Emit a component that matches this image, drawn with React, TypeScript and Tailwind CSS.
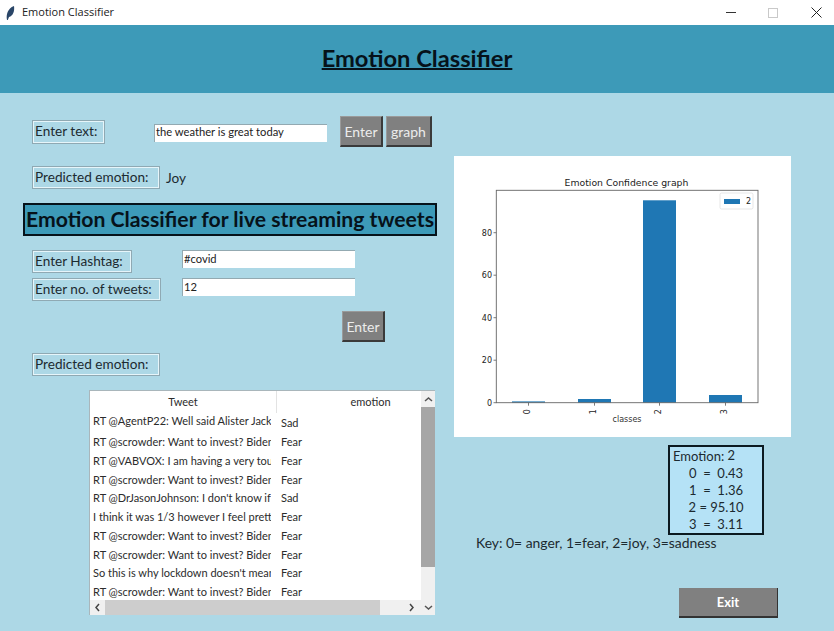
const font = "font-['Lato','Noto_Sans',sans-serif]";

function Label({ w, children }: { w: string; children: React.ReactNode }) {
  return (
    <div className={`${w} h-full flex items-center pl-[2px] border border-[#8fa9b3] shadow-[inset_1px_1px_0_#e6f5fa,inset_-1px_-1px_0_#e6f5fa] text-[13.6px] text-[#1c2a30] whitespace-nowrap`}>
      {children}
    </div>
  );
}

function Btn({ w, children }: { w: string; children: React.ReactNode }) {
  return (
    <div className={`${w} h-[31px] pt-[1px] flex items-center justify-center bg-[#808080] border-t border-l border-t-[#9a9a9a] border-l-[#9a9a9a] border-r-2 border-b-2 border-r-[#3a3a3a] border-b-[#3a3a3a] text-[14px] text-[#ececec]`}>
      {children}
    </div>
  );
}

function Entry({ value }: { value: string }) {
  return (
    <div className="w-[173px] h-[18px] pb-[1px] bg-white border-t border-t-[#93a9b1] border-l border-l-[#93a9b1] pl-[1px] flex items-center text-[11.2px] text-[#222] whitespace-nowrap">
      {value}
    </div>
  );
}

const rows: [string, string][] = [
  ["RT @AgentP22: Well said Alister Jack", "Sad"],
  ["RT @scrowder: Want to invest? Biden", "Fear"],
  ["RT @VABVOX: I am having a very tough", "Fear"],
  ["RT @scrowder: Want to invest? Biden", "Fear"],
  ["RT @DrJasonJohnson: I don't know if it", "Sad"],
  ["I think it was 1/3 however I feel pretty", "Fear"],
  ["RT @scrowder: Want to invest? Biden", "Fear"],
  ["RT @scrowder: Want to invest? Biden", "Fear"],
  ["So this is why lockdown doesn't mean", "Fear"],
  ["RT @scrowder: Want to invest? Biden", "Fear"],
];

function TweetTable() {
  return (
    <div className="ml-[89px] mt-[14px] w-[346px] h-[225px] bg-white border-t border-l border-[#a9b6bb] flex text-[11px] text-[#2c2c2c]">
      <div className="w-[331px] flex flex-col">
        <div className="h-[22px] flex items-center shrink-0 overflow-hidden">
          <div className="w-[187px] shrink-0 h-full text-center leading-[22px] border-r border-r-[#e3e3e3]">Tweet</div>
          <div className="w-[187px] shrink-0 text-center">emotion</div>
        </div>
        <div className="flex-1 overflow-hidden">
          {rows.map(([t, e], i) => (
            <div key={i} className={`flex ${i === 0 ? "h-[20px]" : "h-[18.75px]"} items-center`}>
              <div className={`w-[181px] pl-[3px] overflow-hidden whitespace-nowrap shrink-0 ${i === 0 ? "pb-[4px]" : ""}`}>{t}</div>
              <div className={`ml-[10px] ${i === 0 ? "pt-[1px]" : ""}`}>{e}</div>
            </div>
          ))}
        </div>
        <div className="h-[15px] shrink-0 bg-[#f0f0f0] flex items-center">
          <div className="w-[15px] h-full flex items-center justify-center">
            <svg width="7" height="9" viewBox="0 0 7 9"><path d="M5 1 L2 4.5 L5 8" fill="none" stroke="#444" strokeWidth="1.5" /></svg>
          </div>
          <div className="w-[275px] h-full bg-[#cdcdcd]" />
          <div className="w-[28px]" />
          <svg width="7" height="9" viewBox="0 0 7 9"><path d="M2 1 L5 4.5 L2 8" fill="none" stroke="#444" strokeWidth="1.5" /></svg>
        </div>
      </div>
      <div className="w-[15px] bg-[#f0f0f0] flex flex-col">
        <div className="h-[16px] flex items-center justify-center">
          <svg width="9" height="7" viewBox="0 0 9 7"><path d="M1 5 L4.5 2 L8 5" fill="none" stroke="#555" strokeWidth="1.5" /></svg>
        </div>
        <div className="h-[160px] bg-[#a6a6a6]" />
        <div className="flex-1" />
        <div className="h-[16px] flex items-center justify-center">
          <svg width="9" height="7" viewBox="0 0 9 7"><path d="M1 2 L4.5 5 L8 2" fill="none" stroke="#555" strokeWidth="1.5" /></svg>
        </div>
      </div>
    </div>
  );
}

function Chart() {
  const y0 = 246.7;
  const bars = [
    { x: 58, h: 1.3 },
    { x: 124, h: 3.7 },
    { x: 189, h: 202.4 },
    { x: 255, h: 7.7 },
  ];
  const sc = 2.125;
  return (
    <svg width="337" height="281" viewBox="0 0 337 281" className="block bg-white" style={{ fontFamily: "'DejaVu Sans', sans-serif" }}>
      <text x="172.5" y="30" fontSize="9.3" textAnchor="middle" fill="#222">Emotion Confidence graph</text>
      {bars.map((b, i) => (
        <g key={i}>
          <rect x={b.x} y={y0 - b.h} width="33" height={b.h} fill="#1f77b4" />
          <line x1={b.x + 16.5} x2={b.x + 16.5} y1={y0} y2={y0 + 3} stroke="#444" strokeWidth="0.7" />
          <text transform={`translate(${b.x + 17.5} ${y0 + 9}) rotate(-90)`} fontSize="8" textAnchor="middle" fill="#222">{i}</text>
        </g>
      ))}
      {[0, 20, 40, 60, 80].map((v) => (
        <g key={v}>
          <line x1="39.5" x2="42.3" y1={y0 - v * sc} y2={y0 - v * sc} stroke="#444" strokeWidth="0.7" />
          <text x="38" y={y0 - v * sc + 3} fontSize="8" textAnchor="end" fill="#222">{v}</text>
        </g>
      ))}
      <rect x="42.3" y="34.3" width="261.7" height="212.4" fill="none" stroke="#666" strokeWidth="0.9" />
      <rect x="266" y="37" width="33" height="16" rx="1.5" fill="#fff" stroke="#ddd" strokeWidth="0.7" />
      <rect x="270" y="43" width="16" height="5" fill="#1f77b4" />
      <text x="292" y="48" fontSize="8" fill="#222">2</text>
      <text x="173" y="266" fontSize="8" textAnchor="middle" fill="#333">classes</text>
    </svg>
  );
}

export default function App() {
  return (
    <div className={`w-[834px] h-[631px] overflow-hidden bg-[#add8e6] flex flex-col ${font}`}>
      <div className="h-[25px] shrink-0 bg-white flex items-center">
        <svg width="10" height="16" viewBox="0 0 10 16" className="ml-[5px]">
          <path d="M2 15 C1 10 2.5 3.5 9 1 C9.8 6 8 11 4 12 L2.8 15 Z" fill="#2a4668" />
        </svg>
        <span className="ml-[7px] text-[11px] text-[#222] font-['Open_Sans',sans-serif]">Emotion Classifier</span>
        <div className="ml-auto flex items-center pr-[12px]">
          <div className="w-[10px] h-[1px] bg-[#333]" />
          <div className="ml-[32px] w-[10px] h-[10px] border border-[#c9c9c9]" />
          <svg className="ml-[33px]" width="11" height="11" viewBox="0 0 11 11">
            <path d="M0.5 0.5 L10.5 10.5 M10.5 0.5 L0.5 10.5" stroke="#222" strokeWidth="1" />
          </svg>
        </div>
      </div>
      <div className="h-[68px] shrink-0 bg-[#3d9ab8] flex items-center justify-center">
        <h1 className="text-[23.7px] font-bold underline decoration-2 text-[#06121a]">Emotion Classifier</h1>
      </div>
      <div className="flex flex-1">
        <div className="w-[454px] shrink-0 flex flex-col">
          <div className="mt-[23px] h-[31px] flex items-center pl-[32px]">
            <div className="h-[24px] pb-[0px]"><Label w="w-[73px]">Enter text:</Label></div>
            <div className="ml-[49px] mt-[2px]"><Entry value="the weather is great today" /></div>
            <div className="ml-[13px]"><Btn w="w-[43px]">Enter</Btn></div>
            <div className="ml-[3px]"><Btn w="w-[46px]">graph</Btn></div>
          </div>
          <div className="mt-[19px] h-[23px] flex items-center pl-[32px]">
            <Label w="w-[128px]">Predicted emotion:</Label>
            <span className="ml-[6px] pt-[1px] text-[13.6px] text-[#1c2a30]">Joy</span>
          </div>
          <div className="mt-[14px] ml-[23px] w-[414px] h-[33px] bg-[#3d9ab8] border-2 border-[#06121a] flex items-center justify-center text-[21.2px] font-bold text-[#06121a] whitespace-nowrap">
            Emotion Classifier for live streaming tweets
          </div>
          <div className="mt-[14px] h-[23px] flex pl-[32px]">
            <Label w="w-[100px]">Enter Hashtag:</Label>
            <div className="ml-[50px]"><Entry value="#covid" /></div>
          </div>
          <div className="mt-[5px] h-[23px] flex pl-[32px]">
            <Label w="w-[129px]">Enter no. of tweets:</Label>
            <div className="ml-[21px]"><Entry value="12" /></div>
          </div>
          <div className="mt-[10px] ml-[342px]"><Btn w="w-[43px]">Enter</Btn></div>
          <div className="mt-[11px] h-[23px] pl-[32px] flex">
            <Label w="w-[128px]">Predicted emotion:</Label>
          </div>
          <TweetTable />
        </div>
        <div className="flex-1 flex flex-col">
          <div className="mt-[63px]"><Chart /></div>
          <div className="mt-[8px] ml-[214px] w-[96px] h-[90px] bg-[#b5e2f6] border-2 border-[#0c1a20] flex flex-col text-[13px] text-[#1c2a30]">
            <div className="pl-[3px] h-[18px] leading-[18px] whitespace-pre">Emotion: <span className="inline-block -translate-y-[1px]">2</span></div>
            {["0  =  0.43", "1  =  1.36", "2 = 95.10", "3  =  3.11"].map((t) => (
              <div key={t} className="h-[17px] leading-[17px] text-center whitespace-pre">{t}</div>
            ))}
          </div>
          <div className="ml-[22px] text-[13.9px] leading-[16px] text-[#1c2a30]">Key: 0= anger, 1=fear, 2=joy, 3=sadness</div>
          <div className="mt-[37px] ml-[225px] w-[99px] h-[30px] pt-[2px] bg-[#808080] border-r border-b-2 border-r-[#333] border-b-[#333] flex items-center justify-center text-[13px] font-bold text-white">
            Exit
          </div>
        </div>
      </div>
    </div>
  );
}
